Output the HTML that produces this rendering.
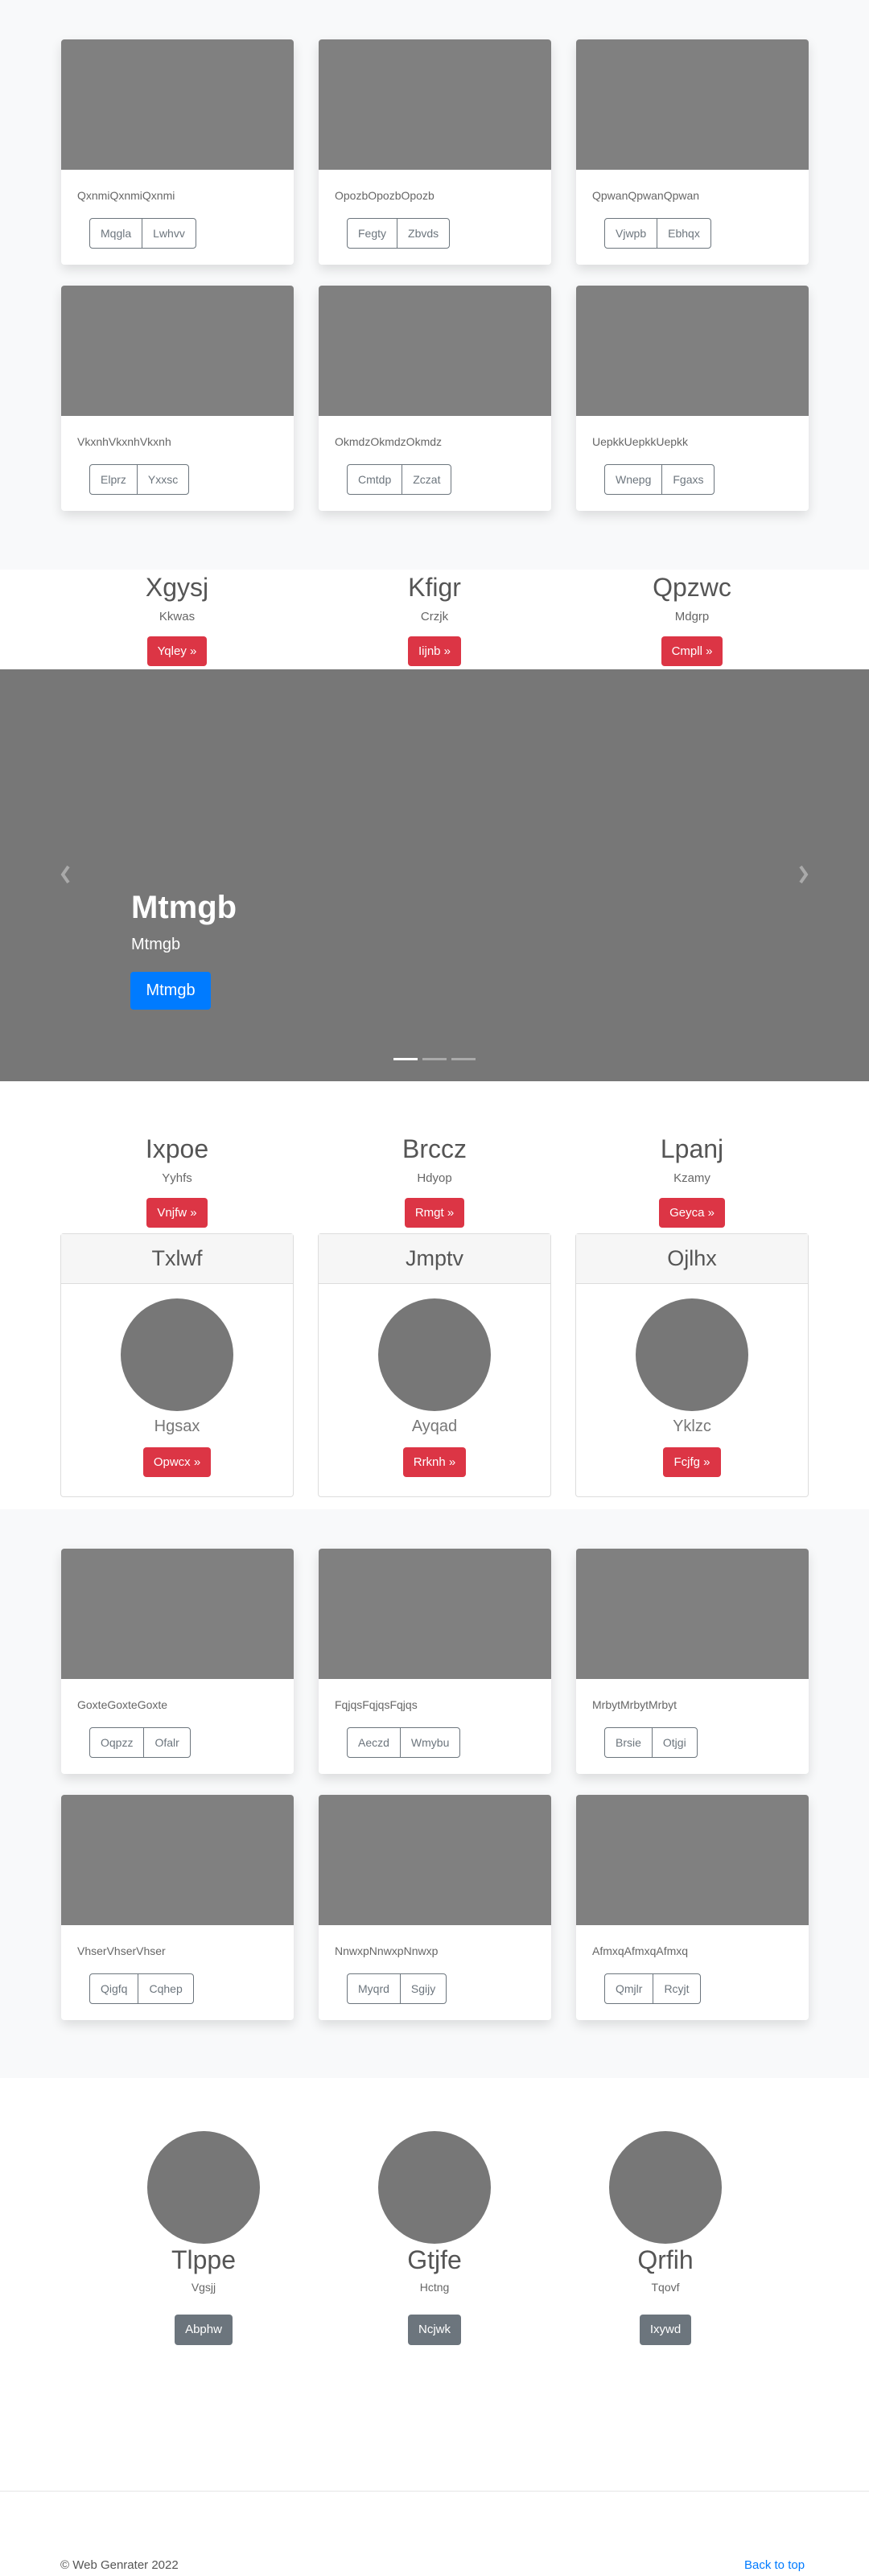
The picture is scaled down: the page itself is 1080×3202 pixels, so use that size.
<!DOCTYPE html>
<html><head><meta charset="utf-8"><style>
*{box-sizing:border-box;margin:0;padding:0}
body{width:1080px;height:3202px;position:relative;background:#fff;font-family:"Liberation Sans",sans-serif;color:#555;overflow:hidden}
.abs{position:absolute}
.bg{background:#f8f9fa}
.card{position:absolute;width:289px;background:#fff;border-radius:4px;box-shadow:0 6px 14px rgba(0,0,0,.12);overflow:hidden}
.card .img{height:162px;background:#808080}
.card .t{position:absolute;left:20px;top:25px;font-size:14px;color:#666;white-space:nowrap}
.card .bg2{position:absolute;left:35px;top:60px;display:flex;border:1px solid #6c757d;border-radius:4px;height:38px}
.card .bg2 span{font-size:14px;color:#6c757d;padding:0 13px;line-height:36px}
.card .bg2 span+span{border-left:1px solid #6c757d}
.col{position:absolute;width:320px;text-align:center}
.h{font-size:32px;color:#555;line-height:40px}
.s{font-size:15px;color:#666}
.rb{display:inline-block;background:#dc3545;color:#fff;border-radius:4px;font-size:15px;padding:0 13px;height:37px;line-height:37px}
.pc{position:absolute;width:290px;height:328px;border:1px solid #ddd;border-radius:4px;text-align:center}
.pc .hd{height:62px;background:#f6f6f6;border-bottom:1px solid #ddd;font-size:27px;line-height:60px;color:#555}
.circ{width:140px;height:140px;border-radius:50%;background:#777;margin:0 auto}
</style></head><body>

<div class="abs bg" style="left:0;top:0;width:1080px;height:708px"></div>
<div class="card" style="left:76px;top:49px;height:280px"><div class="img"></div><div class="t" style="top:186px">QxnmiQxnmiQxnmi</div><div class="bg2" style="top:222px"><span>Mqgla</span><span>Lwhvv</span></div></div>
<div class="card" style="left:396px;top:49px;height:280px"><div class="img"></div><div class="t" style="top:186px">OpozbOpozbOpozb</div><div class="bg2" style="top:222px"><span>Fegty</span><span>Zbvds</span></div></div>
<div class="card" style="left:716px;top:49px;height:280px"><div class="img"></div><div class="t" style="top:186px">QpwanQpwanQpwan</div><div class="bg2" style="top:222px"><span>Vjwpb</span><span>Ebhqx</span></div></div>
<div class="card" style="left:76px;top:355px;height:280px"><div class="img"></div><div class="t" style="top:186px">VkxnhVkxnhVkxnh</div><div class="bg2" style="top:222px"><span>Elprz</span><span>Yxxsc</span></div></div>
<div class="card" style="left:396px;top:355px;height:280px"><div class="img"></div><div class="t" style="top:186px">OkmdzOkmdzOkmdz</div><div class="bg2" style="top:222px"><span>Cmtdp</span><span>Zczat</span></div></div>
<div class="card" style="left:716px;top:355px;height:280px"><div class="img"></div><div class="t" style="top:186px">UepkkUepkkUepkk</div><div class="bg2" style="top:222px"><span>Wnepg</span><span>Fgaxs</span></div></div>

<div class="col" style="left:60px;top:710px"><div class="h">Xgysj</div><div class="s" style="margin-top:8px">Kkwas</div><div class="rb" style="margin-top:16px">Yqley »</div></div>
<div class="col" style="left:380px;top:710px"><div class="h">Kfigr</div><div class="s" style="margin-top:8px">Crzjk</div><div class="rb" style="margin-top:16px">Iijnb »</div></div>
<div class="col" style="left:700px;top:710px"><div class="h">Qpzwc</div><div class="s" style="margin-top:8px">Mdgrp</div><div class="rb" style="margin-top:16px">Cmpll »</div></div>

<div class="abs" style="left:0;top:832px;width:1080px;height:512px;background:#777"></div>
<svg class="abs" style="left:72px;top:1074px" width="20" height="26"><path d="M13 3 L6 13 L13 23" stroke="#aaa" stroke-width="4" fill="none"/></svg>
<svg class="abs" style="left:988px;top:1074px" width="20" height="26"><path d="M7 3 L14 13 L7 23" stroke="#aaa" stroke-width="4" fill="none"/></svg>
<div class="abs" style="left:163px;top:1104px;font-size:40px;color:#fff;font-weight:bold;line-height:48px">Mtmgb</div>
<div class="abs" style="left:163px;top:1163px;font-size:20px;color:#fff">Mtmgb</div>
<div class="abs" style="left:162px;top:1208px;width:100px;height:47px;background:#007bff;border-radius:4px;color:#fff;font-size:20px;line-height:47px;text-align:center">Mtmgb</div>
<div class="abs" style="left:489px;top:1315px;width:30px;height:3px;background:#fff"></div>
<div class="abs" style="left:525px;top:1315px;width:30px;height:3px;background:#aaa"></div>
<div class="abs" style="left:561px;top:1315px;width:30px;height:3px;background:#aaa"></div>

<div class="col" style="left:60px;top:1408px"><div class="h">Ixpoe</div><div class="s" style="margin-top:8px">Yyhfs</div><div class="rb" style="margin-top:16px">Vnjfw »</div></div>
<div class="col" style="left:380px;top:1408px"><div class="h">Brccz</div><div class="s" style="margin-top:8px">Hdyop</div><div class="rb" style="margin-top:16px">Rmgt »</div></div>
<div class="col" style="left:700px;top:1408px"><div class="h">Lpanj</div><div class="s" style="margin-top:8px">Kzamy</div><div class="rb" style="margin-top:16px">Geyca »</div></div>

<div class="pc" style="left:75px;top:1533px"><div class="hd">Txlwf</div><div class="circ" style="margin-top:18px"></div><div style="font-size:20px;color:#777;font-weight:300;margin-top:8px">Hgsax</div><div class="rb" style="margin-top:14px">Opwcx »</div></div>
<div class="pc" style="left:395px;top:1533px"><div class="hd">Jmptv</div><div class="circ" style="margin-top:18px"></div><div style="font-size:20px;color:#777;margin-top:8px">Ayqad</div><div class="rb" style="margin-top:14px">Rrknh »</div></div>
<div class="pc" style="left:715px;top:1533px"><div class="hd">Ojlhx</div><div class="circ" style="margin-top:18px"></div><div style="font-size:20px;color:#777;margin-top:8px">Yklzc</div><div class="rb" style="margin-top:14px">Fcjfg »</div></div>

<div class="abs bg" style="left:0;top:1876px;width:1080px;height:707px"></div>
<div class="card" style="left:76px;top:1925px;height:280px"><div class="img"></div><div class="t" style="top:186px">GoxteGoxteGoxte</div><div class="bg2" style="top:222px"><span>Oqpzz</span><span>Ofalr</span></div></div>
<div class="card" style="left:396px;top:1925px;height:280px"><div class="img"></div><div class="t" style="top:186px">FqjqsFqjqsFqjqs</div><div class="bg2" style="top:222px"><span>Aeczd</span><span>Wmybu</span></div></div>
<div class="card" style="left:716px;top:1925px;height:280px"><div class="img"></div><div class="t" style="top:186px">MrbytMrbytMrbyt</div><div class="bg2" style="top:222px"><span>Brsie</span><span>Otjgi</span></div></div>
<div class="card" style="left:76px;top:2231px;height:280px"><div class="img"></div><div class="t" style="top:186px">VhserVhserVhser</div><div class="bg2" style="top:222px"><span>Qigfq</span><span>Cqhep</span></div></div>
<div class="card" style="left:396px;top:2231px;height:280px"><div class="img"></div><div class="t" style="top:186px">NnwxpNnwxpNnwxp</div><div class="bg2" style="top:222px"><span>Myqrd</span><span>Sgijy</span></div></div>
<div class="card" style="left:716px;top:2231px;height:280px"><div class="img"></div><div class="t" style="top:186px">AfmxqAfmxqAfmxq</div><div class="bg2" style="top:222px"><span>Qmjlr</span><span>Rcyjt</span></div></div>

<div class="col" style="left:93px;top:2649px"><div class="circ"></div><div style="font-size:32px;font-weight:300;color:#555;line-height:40px">Tlppe</div><div style="font-size:14px;color:#666;margin-top:6px">Vgsjj</div><div class="rb" style="background:#6c757d;margin-top:26px;height:38px;line-height:38px">Abphw</div></div>
<div class="col" style="left:380px;top:2649px"><div class="circ"></div><div style="font-size:32px;font-weight:300;color:#555;line-height:40px">Gtjfe</div><div style="font-size:14px;color:#666;margin-top:6px">Hctng</div><div class="rb" style="background:#6c757d;margin-top:26px;height:38px;line-height:38px">Ncjwk</div></div>
<div class="col" style="left:667px;top:2649px"><div class="circ"></div><div style="font-size:32px;font-weight:300;color:#555;line-height:40px">Qrfih</div><div style="font-size:14px;color:#666;margin-top:6px">Tqovf</div><div class="rb" style="background:#6c757d;margin-top:26px;height:38px;line-height:38px">Ixywd</div></div>

<div class="abs" style="left:0;top:3096px;width:1080px;height:1px;background:#e5e5e5"></div>
<div class="abs" style="left:75px;top:3180px;font-size:15px;color:#555">© Web Genrater 2022</div>
<div class="abs" style="left:925px;top:3180px;font-size:15px;color:#007bff">Back to top</div>
</body></html>
